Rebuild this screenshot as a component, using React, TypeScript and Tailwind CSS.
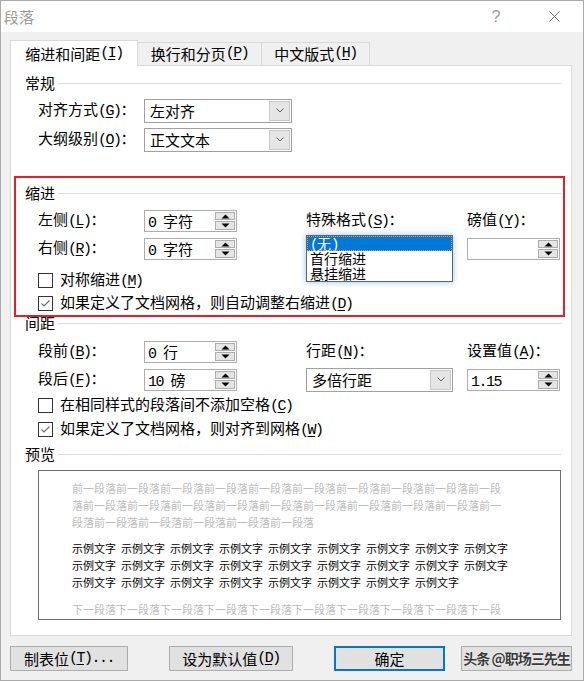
import React from "react";

// Latin runs (accelerators, numbers) use a monospace face squeezed to half-width cells
function L({ children }: { children: React.ReactNode }) {
  return (
    <span className="font-['Liberation_Mono',monospace] tracking-[-1.5px]">
      {children}
    </span>
  );
}

function Acc({ k, dots }: { k: string; dots?: boolean }) {
  return (
    <L>
      (<span className="underline decoration-1 underline-offset-[2px]">{k}</span>)
      {dots ? "..." : ""}
    </L>
  );
}

function Heading({ children }: { children: React.ReactNode }) {
  return (
    <div className="flex h-[16px] items-center">
      <span className="leading-[16px]">{children}</span>
      <div className="ml-[3px] h-px flex-1 bg-[#dcdcdc]" />
    </div>
  );
}

function SpinBtn({ up }: { up?: boolean }) {
  return (
    <div className="flex flex-1 items-center justify-center border border-[#adadad] bg-[#e5e5e5]">
      <svg width="9" height="5" viewBox="0 0 9 5">
        <path
          d={up ? "M0.5 4.5 L4.5 0.5 L8.5 4.5 Z" : "M0.5 0.5 L4.5 4.5 L8.5 0.5 Z"}
          fill="#000"
        />
      </svg>
    </div>
  );
}

function Spin({ children }: { children?: React.ReactNode }) {
  return (
    <div className="flex h-[22px] w-[93px] border border-[#adadad] bg-white">
      <div className="flex-1 whitespace-pre pl-[3px] leading-[20px]">{children}</div>
      <div className="flex w-[21px] flex-col gap-px py-px pr-px">
        <SpinBtn up />
        <SpinBtn />
      </div>
    </div>
  );
}

function Combo({ children, w }: { children: React.ReactNode; w: string }) {
  return (
    <div className={`flex h-[24px] border border-[#a0a0a0] bg-white ${w}`}>
      <div className="flex-1 pl-[5px] leading-[22px]">{children}</div>
      <div className="my-px mr-px flex w-[21px] items-center justify-center border border-[#c8c8c8] bg-[#e5e5e5]">
        <svg width="8" height="5" viewBox="0 0 8 5">
          <path d="M0.5 0.5 L4 4 L7.5 0.5" fill="none" stroke="#606060" />
        </svg>
      </div>
    </div>
  );
}

function Check({ checked, children }: { checked?: boolean; children: React.ReactNode }) {
  return (
    <div className="flex h-[20px] items-center">
      <div className="flex h-[15px] w-[15px] items-center justify-center border border-[#333333] bg-white">
        {checked && (
          <svg width="13" height="13" viewBox="0 0 13 13">
            <polyline
              points="2.5,6.5 5,9 10.5,3.5"
              fill="none"
              stroke="#6a6a6a"
              strokeWidth="1.1"
            />
          </svg>
        )}
      </div>
      <span className="ml-[7px] leading-[20px]">{children}</span>
    </div>
  );
}

function ListBox() {
  return (
    <div className="absolute left-0 top-[-1px] h-[47px] w-[147px] border border-[#646464] bg-white text-[14px] shadow-[0_0_6px_rgba(0,120,215,0.45)]">
      <div className="h-[15px] bg-[#0078d7] pl-[3px] leading-[15px] text-white outline-1 -outline-offset-1 outline-dotted outline-[#e8a040]">
        <L>(</L>无<L>)</L>
      </div>
      <div className="h-[15px] pl-[3px] leading-[15px]">首行缩进</div>
      <div className="h-[15px] pl-[3px] leading-[15px]">悬挂缩进</div>
    </div>
  );
}

function Btn({
  w,
  primary,
  children,
}: {
  w: string;
  primary?: boolean;
  children: React.ReactNode;
}) {
  return (
    <div
      className={`flex h-[25px] items-center justify-center bg-[#e1e1e1] leading-[21px] ${w} ${
        primary ? "border-2 border-[#0078d7]" : "border border-[#adadad]"
      }`}
    >
      {children}
    </div>
  );
}

const BEFORE = "前一段落".repeat(30);
const AFTER = "下一段落".repeat(12);
const PREV_BEFORE = [BEFORE.slice(0, 39), BEFORE.slice(39, 78), BEFORE.slice(78, 100)];
const SAMPLE_ROWS = [9, 9, 8];

const ROW = "grid h-[22px] grid-cols-[106px_162px_161px_1fr] items-center";

export default function App() {
  return (
    <div className="h-[681px] w-[584px] border border-[#aaaaaa] bg-[#f0f0f0] font-['Noto_Sans_CJK_SC',sans-serif] text-[15px] text-black">
      {/* title bar */}
      <div className="flex h-[31px] items-center bg-white">
        <span className="pl-[3px] leading-[20px] text-[#9a9a9a]">段落</span>
        <div className="flex-1" />
        <div className="flex h-full w-[58px] items-center justify-center font-['Liberation_Sans',sans-serif] text-[16px] text-[#9a9a9a]">
          ?
        </div>
        <div className="flex h-full w-[58px] items-center justify-center">
          <svg width="11" height="11" viewBox="0 0 11 11">
            <path d="M0.5 0.5 L10.5 10.5 M10.5 0.5 L0.5 10.5" stroke="#666" strokeWidth="1" />
          </svg>
        </div>
      </div>

      {/* tabs */}
      <div className="flex items-end pl-[9px] pt-[8px]">
        <div className="relative z-10 flex h-[26px] w-[128px] items-center justify-center border-x border-t border-[#d9d9d9] bg-white leading-[20px]">
          缩进和间距<Acc k="I" />
        </div>
        <div className="mb-px flex h-[23px] w-[124px] items-center justify-center border-r border-t border-[#d9d9d9] leading-[20px]">
          换行和分页<Acc k="P" />
        </div>
        <div className="mb-px flex h-[23px] w-[108px] items-center justify-center border-r border-t border-[#d9d9d9] leading-[20px]">
          中文版式<Acc k="H" />
        </div>
      </div>

      {/* tab panel */}
      <div className="relative -mt-px ml-[9px] w-[562px] border border-[#d9d9d9] bg-white pb-[15px] pl-[14px] pr-[10px] pt-[9px]">
        <Heading>常规</Heading>
        <div className="pl-[13px]">
          <div className="mt-[7px] grid h-[24px] grid-cols-[106px_1fr] items-center">
            <span>对齐方式<Acc k="G" />：</span>
            <Combo w="w-[148px]">左对齐</Combo>
          </div>
          <div className="mt-[5px] grid h-[24px] grid-cols-[106px_1fr] items-center">
            <span>大纲级别<Acc k="O" />：</span>
            <Combo w="w-[148px]">正文文本</Combo>
          </div>
        </div>

        <div className="mt-[34px]">
          <Heading>缩进</Heading>
        </div>
        <div className="pl-[13px]">
          <div className={`mt-[7px] ${ROW}`}>
            <span>左侧<Acc k="L" />：</span>
            <Spin>
              <L>0 </L>字符
            </Spin>
            <span>特殊格式<Acc k="S" />：</span>
            <span>磅值<Acc k="Y" />：</span>
          </div>
          <div className={`mt-[6px] ${ROW}`}>
            <span>右侧<Acc k="R" />：</span>
            <Spin>
              <L>0 </L>字符
            </Spin>
            <div className="relative h-full">
              <ListBox />
            </div>
            <Spin />
          </div>
          <div className="mt-[12px]">
            <Check>
              对称缩进<Acc k="M" />
            </Check>
          </div>
          <div className="mt-[3px]">
            <Check checked>
              如果定义了文档网格，则自动调整右缩进<Acc k="D" />
            </Check>
          </div>
        </div>

        <div className="mt-[2px]">
          <Heading>间距</Heading>
        </div>
        <div className="pl-[13px]">
          <div className={`mt-[8px] ${ROW}`}>
            <span>段前<Acc k="B" />：</span>
            <Spin>
              <L>0 </L>行
            </Spin>
            <span>行距<Acc k="N" />：</span>
            <span>设置值<Acc k="A" />：</span>
          </div>
          <div className={`mt-[6px] ${ROW}`}>
            <span>段后<Acc k="F" />：</span>
            <Spin>
              <L>10 </L>磅
            </Spin>
            <Combo w="w-[147px]">多倍行距</Combo>
            <Spin>
              <L>1.15</L>
            </Spin>
          </div>
          <div className="mt-[6px]">
            <Check>
              在相同样式的段落间不添加空格<Acc k="C" />
            </Check>
          </div>
          <div className="mt-[4px]">
            <Check checked>
              如果定义了文档网格，则对齐到网格<Acc k="W" />
            </Check>
          </div>
        </div>

        <div className="mt-[7px]">
          <Heading>预览</Heading>
        </div>
        <div className="ml-[13px] mt-[8px] h-[150px] border border-[#6e6e6e] bg-white pl-[33px] pt-[9px] text-[11px] leading-[17px]">
          {PREV_BEFORE.map((line, i) => (
            <div key={i} className="whitespace-nowrap text-[#bcbcbc]">
              {line}
            </div>
          ))}
          <div className="mt-[9px]">
            {SAMPLE_ROWS.map((n, i) => (
              <div key={i} className="flex gap-x-[5px] whitespace-nowrap">
                {Array.from({ length: n }).map((_, j) => (
                  <span key={j}>示例文字</span>
                ))}
              </div>
            ))}
          </div>
          <div className="mt-[10px] whitespace-nowrap text-[#bcbcbc]">{AFTER.slice(0, 39)}</div>
        </div>

        {/* red annotation frame */}
        <div className="pointer-events-none absolute left-[3px] top-[110px] h-[141px] w-[551px] border-2 border-[#e51f26]" />
      </div>

      {/* buttons */}
      <div className="mt-[10px] flex pl-[9px]">
        <Btn w="w-[118px]">
          制表位<Acc k="T" dots />
        </Btn>
        <div className="ml-[41px]">
          <Btn w="w-[124px]">
            设为默认值<Acc k="D" />
          </Btn>
        </div>
        <div className="ml-[41px]">
          <Btn w="w-[111px]" primary>
            确定
          </Btn>
        </div>
        <div className="ml-[16px]">
          <Btn w="w-[111px]">
            <span className="whitespace-nowrap text-[14px] font-bold tracking-[-1px] text-[#3a3a3a] [text-shadow:0_0_2px_#fff]">
              头条 @职场三先生
            </span>
          </Btn>
        </div>
      </div>
    </div>
  );
}
